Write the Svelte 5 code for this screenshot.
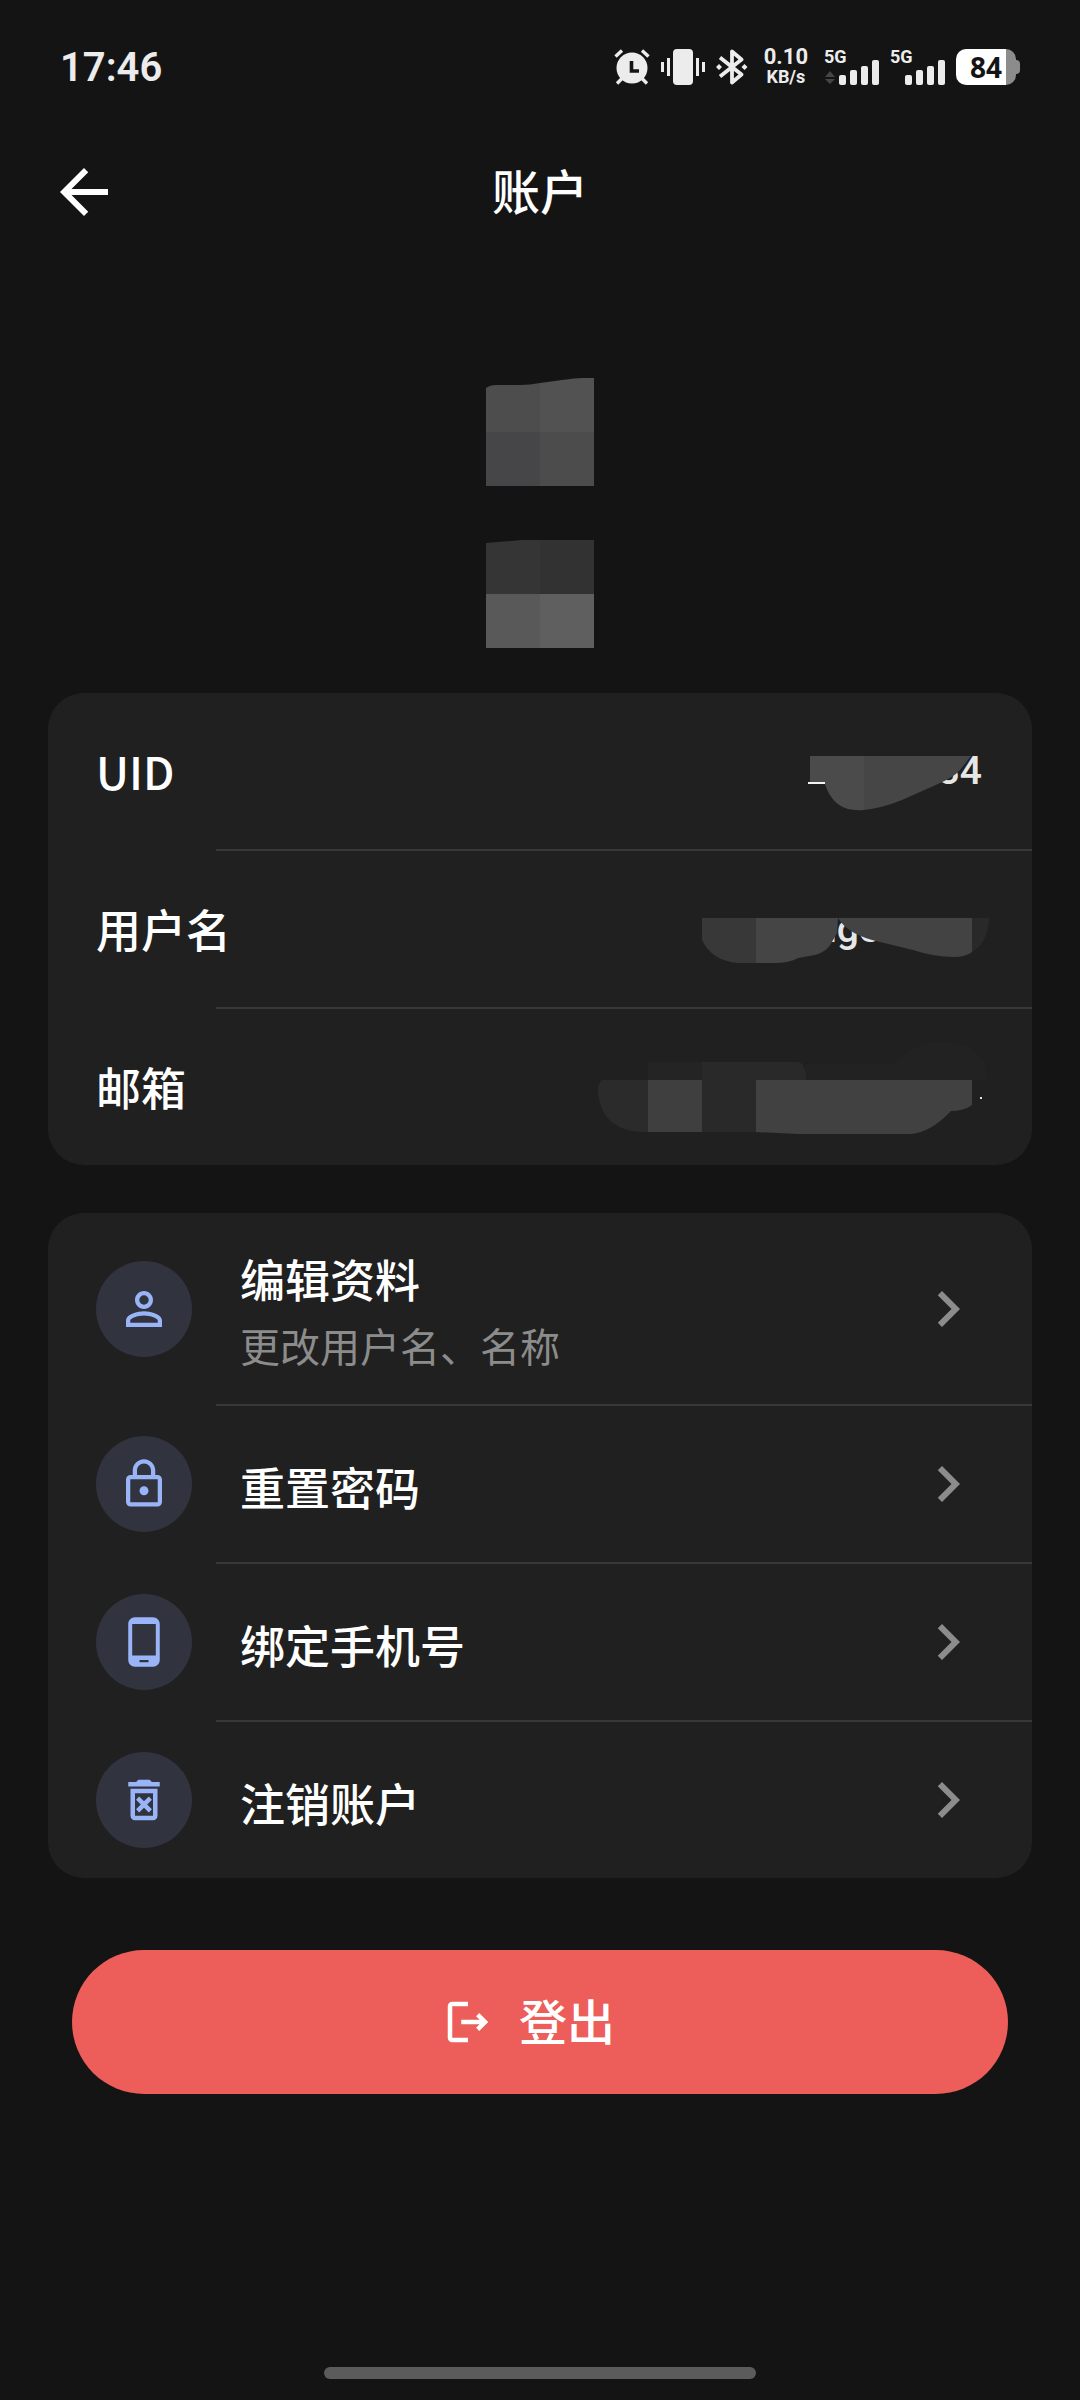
<script lang="ts">
    interface MenuItem {
        title: string;
        hint?: string;
        icon: string;
    }

    const menu: MenuItem[] = [
        {
            title: "编辑资料",
            hint: "更改用户名、名称",
            icon: "M12 5.9a2.1 2.1 0 1 1 0 4.2 2.1 2.1 0 0 1 0-4.2m0 9c2.97 0 6.1 1.46 6.1 2.1v1.1H5.9V17c0-.64 3.13-2.1 6.1-2.1M12 4C9.79 4 8 5.79 8 8s1.79 4 4 4 4-1.79 4-4-1.79-4-4-4zm0 9c-2.67 0-8 1.34-8 4v3h16v-3c0-2.66-5.33-4-8-4z",
        },
        {
            title: "重置密码",
            icon: "M18 8h-1V6c0-2.76-2.24-5-5-5S7 3.24 7 6v2H6c-1.1 0-2 .9-2 2v10c0 1.1.9 2 2 2h12c1.1 0 2-.9 2-2V10c0-1.1-.9-2-2-2zM8.9 6c0-1.71 1.39-3.1 3.1-3.1s3.1 1.39 3.1 3.1v2H8.9V6zM18.1 20.1H5.9V9.9h12.2v10.2zM12 17c1.1 0 2-.9 2-2s-.9-2-2-2-2 .9-2 2 .9 2 2 2z",
        },
        {
            title: "绑定手机号",
            icon: "M16 1H8C6.34 1 5 2.34 5 4v16c0 1.66 1.34 3 3 3h8c1.66 0 3-1.34 3-3V4c0-1.66-1.34-3-3-3zm-2 20h-4v-1h4v1zm3.25-3H6.75V4h10.5v14z",
        },
        {
            title: "注销账户",
            icon: "M14.12 10.47 12 12.59l-2.13-2.12-1.41 1.41L10.59 14l-2.12 2.12 1.41 1.41L12 15.41l2.12 2.12 1.41-1.41L13.41 14l2.12-2.12zM15.5 4l-1-1h-5l-1 1H5v2h14V4zM6 19c0 1.1.9 2 2 2h8c1.1 0 2-.9 2-2V7H6v12zM8 9h8v10H8V9z",
        },
    ];
</script>

<div class="page">
    <div class="status">
        <span class="time">17:46</span>
        <div class="tray">
            <svg width="36" height="36" viewBox="0 0 36 36" aria-hidden="true">
                <circle cx="18" cy="19" r="15.5" fill="#ececec" />
                <path d="M1.5 7.5 8 1.5M34.5 7.5 28 1.5M3 34.5l5-5M33 34.5l-5-5" stroke="#ececec" stroke-width="3.4" />
                <path d="M17.5 12v10H25" fill="none" stroke="#141414" stroke-width="3.6" />
            </svg>
            <svg width="46" height="36" viewBox="0 0 46 36" aria-hidden="true">
                <rect x="13" y="0" width="20" height="36" rx="4" fill="#ececec" />
                <path d="M8.5 9v18M37.5 9v18M2.5 13v10M43.5 13v10" stroke="#ececec" stroke-width="3" />
            </svg>
            <svg width="32" height="36" viewBox="0 0 32 36" aria-hidden="true">
                <path d="M4 8.5 25.5 25.5 16 33.5V2.5L25.5 10.5 4 27.5" fill="none" stroke="#ececec" stroke-width="3.8" stroke-linejoin="round" />
                <path d="M3 15l3 3-3 3-3-3zM28.5 15l3 3-3 3-3-3z" fill="#ececec" />
            </svg>
            <div class="speed">
                <span class="rate">0.10</span>
                <span class="unit">KB/s</span>
            </div>
            {#each [true, false] as active}
                <div class="signal">
                    <span class="net">5G</span>
                    <svg width="56" height="26" viewBox="0 0 56 26" aria-hidden="true">
                        {#if active}
                            <path d="M6 12l5 6H1zM6 25l5-5H1z" fill="#454545" />
                        {/if}
                        <rect x="15" y="16" width="7" height="10" rx="2" fill="#ececec" />
                        <rect x="26" y="11" width="7" height="15" rx="2" fill="#ececec" />
                        <rect x="37" y="7" width="7" height="19" rx="2" fill="#ececec" />
                        <rect x="48" y="1" width="7" height="25" rx="2" fill="#ececec" />
                    </svg>
                </div>
            {/each}
            <div class="battery"><span>84</span></div>
        </div>
    </div>

    <header>
        <button class="back" aria-label="返回">
            <svg width="72" height="72" viewBox="0 0 24 24" fill="currentColor">
                <path d="M20 11H7.83l5.59-5.59L12 4l-8 8 8 8 1.41-1.41L7.83 13H20v-2z" />
            </svg>
        </button>
        <h1>账户</h1>
    </header>

    <main>
        <div class="profile">
            <svg width="108" height="108" viewBox="0 0 108 108" aria-hidden="true">
                <path d="M0 10Q4 7 10 7H34Q44 7 54 5V54H0z" fill="#4d4d4d" />
                <path d="M54 5 76 2Q90 0 96 0H108V54H54z" fill="#525253" />
                <rect y="54" width="54" height="54" fill="#464648" />
                <rect x="54" y="54" width="54" height="54" fill="#4c4c4c" />
            </svg>
            <svg width="108" height="108" viewBox="0 0 108 108" aria-hidden="true">
                <path d="M0 3 36 0H54V54H0z" fill="#353535" />
                <rect x="54" width="54" height="54" fill="#323232" />
                <rect y="54" width="54" height="54" fill="#595959" />
                <rect x="54" y="54" width="54" height="54" fill="#5f5f5f" />
            </svg>
        </div>

        <dl class="card">
            <div class="info">
                <dt>UID</dt>
                <dd>
                    <svg class="masked" width="200" height="80" viewBox="0 0 200 80">
                        <text x="198" y="53" text-anchor="end">34</text>
                        <rect x="24" y="51" width="17" height="2" fill="#f4f4f4" />
                        <path d="M26 25H80V79Q50 82 41 53V51H26z" fill="#4b4b4b" />
                        <path d="M80 25H187L176 39Q170 46 154 53L118 69Q98 77 80 79z" fill="#464646" />
                    </svg>
                </dd>
            </div>
            <div class="info">
                <dt>用户名</dt>
                <dd>
                    <svg class="masked" width="300" height="80" viewBox="0 0 300 80">
                        <text x="131" y="53">nge</text>
                        <path d="M18 29H72V74H54Q28 72 18 51z" fill="#383838" />
                        <path d="M72 29H154L153 44 148 53Q143 63 131 66L114 69Q106 74 90 74H72z" fill="#454545" />
                        <path d="M154 29H288V63Q282 68 270 68 250 68 229 61L196 53Q164 46 154 29z" fill="#434343" />
                        <path d="M288 29H305Q304 54 288 63z" fill="#292929" />
                    </svg>
                </dd>
            </div>
            <div class="info">
                <dt>邮箱</dt>
                <dd>
                    <svg class="masked" width="400" height="80" viewBox="0 0 400 80" aria-hidden="true">
                        <path d="M64 15H118V33H64z" fill="#242424" />
                        <path d="M118 15H214Q222 16 222 33H118z" fill="#292929" />
                        <path d="M222 17H310Q332 -6 360 -6 406 0 402 33H222z" fill="#222" />
                        <path d="M18 33H64V85Q18 86 14 46 13 37 18 33z" fill="#2b2b2b" />
                        <rect x="64" y="33" width="54" height="52" fill="#3f3f3f" />
                        <rect x="118" y="33" width="54" height="52" fill="#292929" />
                        <path d="M172 33H388V58Q380 64 367 64 346 86 326 87H214L172 85z" fill="#414141" />
                        <rect x="396" y="50" width="2" height="2" fill="#e6e6e6" />
                    </svg>
                </dd>
            </div>
        </dl>

        <ul class="card">
            {#each menu as item}
                <li>
                    <button class="item" class:tall={item.hint}>
                        <span class="badge">
                            <svg width="54" height="54" viewBox="0 0 24 24" fill="currentColor" aria-hidden="true">
                                <path fill-rule="evenodd" d={item.icon} />
                            </svg>
                        </span>
                        <span class="label">
                            <span class="title">{item.title}</span>
                            {#if item.hint}
                                <span class="hint">{item.hint}</span>
                            {/if}
                        </span>
                        <svg class="chevron" width="72" height="72" viewBox="0 0 24 24" fill="currentColor" aria-hidden="true">
                            <path d="M10 6 8.59 7.41 13.17 12l-4.58 4.59L10 18l6-6z" />
                        </svg>
                    </button>
                </li>
            {/each}
        </ul>

        <button class="logout">
            <svg width="54" height="54" viewBox="0 0 24 24" fill="currentColor" aria-hidden="true">
                <path d="M17 8l-1.41 1.41L17.17 11H9v2h8.17l-1.58 1.58L17 16l4-4-4-4zM5 5h7V3H5c-1.1 0-2 .9-2 2v14c0 1.1.9 2 2 2h7v-2H5V5z" />
            </svg>
            <span>登出</span>
        </button>
    </main>

    <div class="home"></div>
</div>

<style>
:global(body) {
    background: #141414;
}
.page {
    display: flex;
    flex-direction: column;
    box-sizing: border-box;
    min-height: 100vh;
    padding-bottom: 21px;
    color: #fff;
    font-family: "Noto Sans CJK SC", sans-serif;
}
button {
    padding: 0;
    border: 0;
    background: none;
    color: inherit;
    font: inherit;
    cursor: pointer;
}
svg {
    display: block;
    flex: none;
}

/* status bar */
.status {
    display: flex;
    justify-content: space-between;
    align-items: center;
    height: 134px;
    padding: 0 60px;
    color: #ececec;
    font-family: Roboto, sans-serif;
}
.time {
    font-size: 40px;
    font-weight: 600;
}
.tray {
    display: flex;
    align-items: center;
    gap: 10px;
}
.speed {
    display: flex;
    flex-direction: column;
    align-items: center;
    margin: 0 6px;
    font-weight: 700;
}
.rate {
    font-size: 22px;
    line-height: 20px;
}
.unit {
    font-size: 18px;
    line-height: 20px;
}
.signal {
    position: relative;
    padding-top: 10px;
}
.net {
    position: absolute;
    top: 0;
    left: 0;
    font-size: 18px;
    font-weight: 700;
    line-height: 16px;
}
.battery {
    display: flex;
    position: relative;
    justify-content: center;
    align-items: center;
    width: 60px;
    height: 36px;
    margin-right: 4px;
    border-radius: 10px;
    background: linear-gradient(to right, #fff 50px, #8c8c8c 50px);
    color: #141414;
    font-family: "Noto Sans", sans-serif;
    font-size: 28px;
    font-weight: 700;
}
.battery::after {
    content: "";
    position: absolute;
    top: 11px;
    left: 60px;
    width: 4px;
    height: 14px;
    border-radius: 0 4px 4px 0;
    background: #8c8c8c;
}

/* title bar */
header {
    display: grid;
    grid-template-columns: 1fr auto 1fr;
    align-items: center;
    height: 116px;
    padding: 0 48px;
}
.back {
    justify-self: start;
}
h1 {
    margin: 0;
    padding-bottom: 6px;
    font-size: 48px;
    font-weight: 500;
    line-height: 64px;
}

main {
    padding: 0 48px;
}
.profile {
    display: flex;
    flex-direction: column;
    align-items: center;
    gap: 54px;
    padding: 128px 0 45px;
}

/* cards */
.card {
    margin: 0 0 48px;
    padding: 0;
    overflow: hidden;
    border-radius: 36px;
    background: #202020;
    list-style: none;
}
.info + .info,
li + li {
    background: linear-gradient(#383838, #383838) 168px 0 / 100% 2px no-repeat;
    padding-top: 2px;
}
.info {
    display: flex;
    justify-content: space-between;
    align-items: center;
    height: 156px;
    padding: 0 48px;
}
dt,
.title {
    font-size: 45px;
    font-weight: 500;
    line-height: 64px;
}
dd {
    margin: 0;
}
.masked {
    overflow: visible;
    fill: #e6e6e6;
    font-family: Roboto, sans-serif;
    font-size: 39px;
    font-weight: 500;
}
.item {
    display: flex;
    align-items: center;
    gap: 48px;
    width: 100%;
    height: 156px;
    padding: 0 48px;
    text-align: left;
}
.item.tall {
    height: 191px;
}
.badge {
    display: flex;
    justify-content: center;
    align-items: center;
    width: 96px;
    height: 96px;
    border-radius: 50%;
    background: #31343f;
    color: #9ab4f8;
}
.label {
    display: flex;
    flex: 1;
    flex-direction: column;
    gap: 2px;
    padding-top: 6px;
}
.hint {
    color: #8c8c8c;
    font-size: 40px;
    font-weight: 400;
    line-height: 64px;
}
.chevron {
    color: #8c8c8c;
}

.logout {
    display: flex;
    justify-content: center;
    align-items: center;
    gap: 24px;
    width: calc(100% - 48px);
    height: 144px;
    margin: 72px 24px 0;
    padding-right: 24px;
    border-radius: 72px;
    background: #ed5d59;
    font-size: 48px;
    font-weight: 500;
}
.logout span {
    padding-bottom: 6px;
}

/* gesture bar */
.home {
    width: 40%;
    height: 12px;
    margin: auto auto 0;
    border-radius: 6px;
    background: #5b5b5b;
}
</style>
